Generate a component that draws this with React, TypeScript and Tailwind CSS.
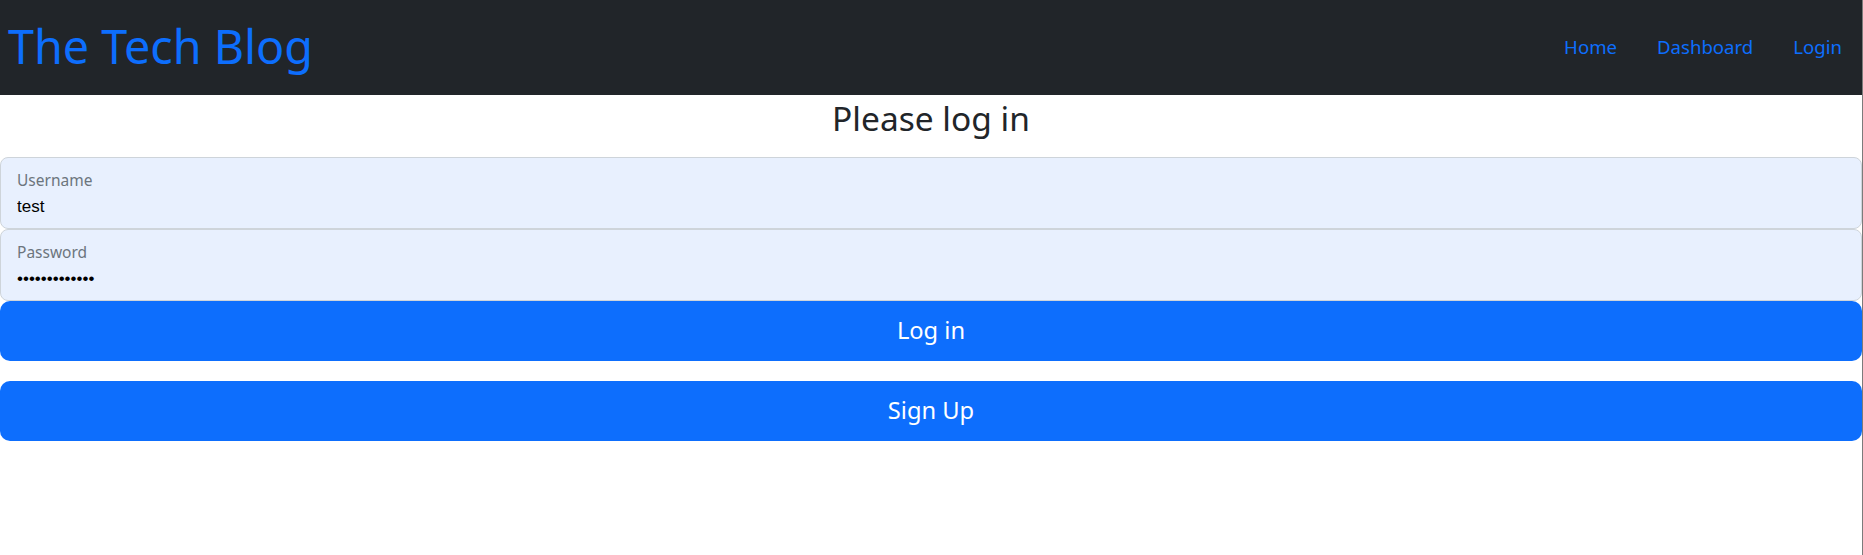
import { useState } from "react"

const sans = "font-['Segoe_UI','Noto_Sans',sans-serif]"

function FloatingField({
  label,
  value,
  type,
}: {
  label: string
  value: string
  type: string
}) {
  const [val, setVal] = useState(value)
  return (
    <div className="relative h-[72px] w-full rounded-[8px] border border-[#ced4da] bg-[#e8f0fe]">
      <label className={`absolute left-[16px] top-[11px] text-[15.5px] leading-[22px] text-[#6c757d] ${sans}`}>
        {label}
      </label>
      <input
        type={type}
        value={val}
        onChange={(e) => setVal(e.target.value)}
        className="absolute bottom-[8px] left-[16px] right-[16px] h-[26px] bg-transparent font-['Liberation_Sans',Arial,sans-serif] text-[17px] text-black outline-none"
      />
    </div>
  )
}

export default function App() {
  return (
    <div className={`min-h-[555px] w-full border-r border-[#7b7b7b] bg-white ${sans}`}>
      {/* Navbar */}
      <nav className="flex h-[95px] items-center justify-between bg-[#212529]">
        <a href="#" className="pl-[8px] pb-[2px] text-[46.7px] leading-none text-[#0d6efd]">
          The Tech Blog
        </a>
        <ul className="flex items-center pb-[2px]">
          {["Home", "Dashboard", "Login"].map((item) => (
            <li key={item}>
              <a href="#" className="block px-[20px] text-[18.6px] text-[#0d6efd]">
                {item}
              </a>
            </li>
          ))}
        </ul>
      </nav>

      {/* Login form */}
      <main>
        <h2 className="pt-[4px] text-center text-[33.5px] leading-[38px] text-[#212529]">Please log in</h2>
        <form className="mt-[20px] flex flex-col" onSubmit={(e) => e.preventDefault()}>
          <FloatingField label="Username" value="test" type="text" />
          <FloatingField label="Password" value="password12345" type="password" />
          <button
            type="submit"
            className="h-[60px] w-full rounded-[10px] bg-[#0d6efd] text-[23.7px] text-white"
          >
            Log in
          </button>
          <button
            type="button"
            className="mt-[20px] h-[60px] w-full rounded-[10px] bg-[#0d6efd] text-[23.7px] text-white"
          >
            Sign Up
          </button>
        </form>
      </main>
    </div>
  )
}
